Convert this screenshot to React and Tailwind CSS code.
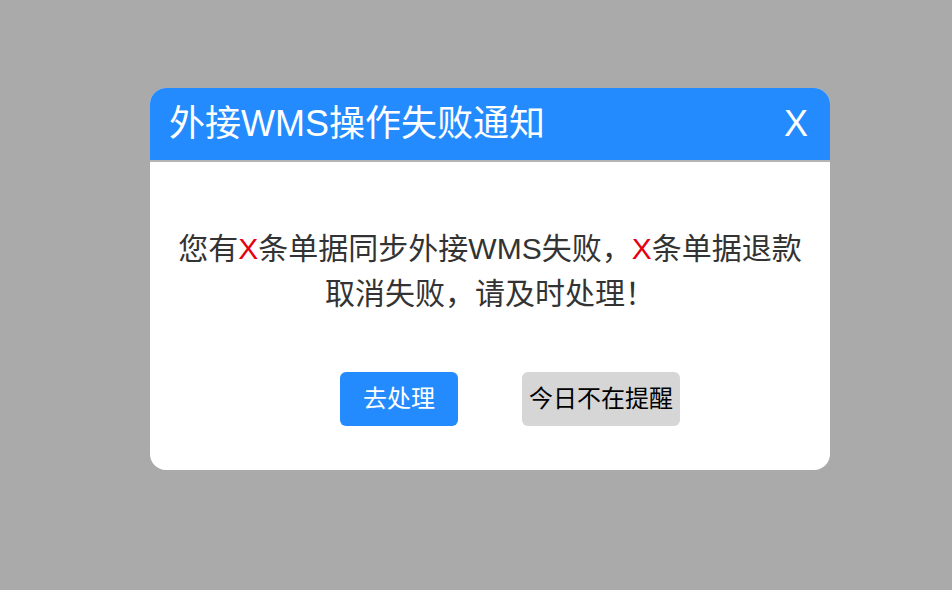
export default function App() {
  const font = { fontFamily: '"Liberation Sans", "Noto Sans CJK SC", sans-serif' };
  return (
    <div className="w-[952px] h-[590px] bg-[#aaaaaa] pt-[88px] pl-[150px]" style={font}>
      <div className="w-[680px] h-[382px] bg-white rounded-[16px] overflow-hidden flex flex-col">
        <div className="h-[74px] bg-[#248bff] border-b-2 border-[#b4b4b4] flex items-center justify-between pl-[19px] pr-[22px] text-white">
          <span className="text-[36px] leading-none">外接WMS操作失败通知</span>
          <span className="text-[36px] leading-none">X</span>
        </div>
        <p className="px-[20px] pt-[64px] text-center text-[30px] leading-[45px] text-[#333333]">
          您有<span className="text-[#e60012]">X</span>条单据同步外接WMS失败，<span className="text-[#e60012]">X</span>条单据退款取消失败，请及时处理！
        </p>
        <div className="flex pl-[190px] gap-[64px] mt-[56px]">
          <button className="w-[118px] h-[54px] rounded-[6px] bg-[#248bff] text-white text-[24px]">去处理</button>
          <button className="w-[158px] h-[54px] rounded-[6px] bg-[#d6d6d6] text-black text-[24px]">今日不在提醒</button>
        </div>
      </div>
    </div>
  );
}
